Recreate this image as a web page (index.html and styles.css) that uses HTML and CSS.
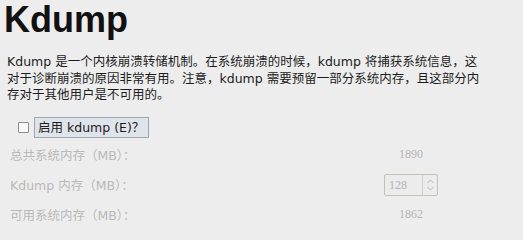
FILE: index.html
```html
<!DOCTYPE html>
<html lang="zh-CN">
<head>
<meta charset="utf-8">
<title>Kdump</title>
<link rel="stylesheet" href="styles.css">
</head>
<body>
<div class="page">
  <h1 class="title">Kdump</h1>
  <p class="desc">Kdump 是一个内核崩溃转储机制。在系统崩溃的时候，kdump 将捕获系统信息，这对于诊断崩溃的原因非常有用。注意，kdump 需要预留一部分系统内存，且这部分内存对于其他用户是不可用的。</p>
  <div class="enable-row">
    <span class="checkbox"></span>
    <span class="enable-label">启用 kdump (E)？</span>
  </div>
  <div class="mem-grid">
    <div class="mem-label">总共系统内存（MB）：</div>
    <div class="mem-value">1890</div>
    <div class="mem-label">Kdump 内存（MB）：</div>
    <div class="mem-value">
      <div class="spin">
        <span class="spin-text">128</span>
        <span class="spin-buttons">
          <svg width="9" height="16" viewBox="0 0 9 16">
            <path d="M1.5 6 L4.5 3 L7.5 6" fill="none" stroke="#b9b9b9" stroke-width="1"/>
            <path d="M1.5 10 L4.5 13 L7.5 10" fill="none" stroke="#b9b9b9" stroke-width="1"/>
          </svg>
        </span>
      </div>
    </div>
    <div class="mem-label">可用系统内存（MB）：</div>
    <div class="mem-value">1862</div>
  </div>
</div>
</body>
</html>
```

FILE: styles.css
```css
html, body {
  margin: 0;
  padding: 0;
  background: #ededed;
}

body {
  font-family: "DejaVu Sans", "Noto Sans CJK SC", sans-serif;
  color: #1c1c1c;
}

.page {
  padding-left: 7px;
}

.title {
  margin: 0 0 0 -3px;
  font-family: "Liberation Sans", Arial, sans-serif;
  font-weight: bold;
  font-size: 36px;
  line-height: 40px;
  color: #111;
}

.desc {
  margin: 14px 0 0 0;
  width: 480px;
  font-size: 12.5px;
  line-height: 16.5px;
}

.enable-row {
  display: flex;
  align-items: center;
  margin-top: 13px;
  height: 21px;
}

.checkbox {
  width: 9px;
  height: 9px;
  margin-left: 11px;
  border: 1px solid #8c8c8c;
  border-radius: 1px;
  background: #f9f9f9;
}

.enable-label {
  margin-left: 5px;
  height: 19px;
  line-height: 19px;
  padding: 0 4px 0 3px;
  border: 1px solid #9ea6b4;
  background: #dfe3ea;
  font-size: 12.5px;
  color: #1c1c1c;
}

.mem-grid {
  display: grid;
  grid-template-columns: 374px 54px;
  grid-auto-rows: 30px;
  align-items: center;
  margin-top: 2px;
  padding-left: 3px;
}

.mem-label {
  font-size: 12.5px;
  color: #b9b9b9;
}

.mem-value {
  font-family: "Liberation Serif", serif;
  font-size: 12px;
  color: #b3b3b3;
  text-align: center;
}

.spin {
  display: flex;
  height: 20px;
  border: 1px solid #c4c1bd;
  border-radius: 2px;
  background: #ececec;
  text-align: left;
}

.spin-text {
  flex: 1;
  padding-left: 4px;
  line-height: 20px;
}

.spin-buttons {
  width: 14px;
  display: flex;
  align-items: center;
  justify-content: center;
  border-left: 1px solid #cfcfcf;
}

.spin-buttons svg {
  display: block;
}
```
